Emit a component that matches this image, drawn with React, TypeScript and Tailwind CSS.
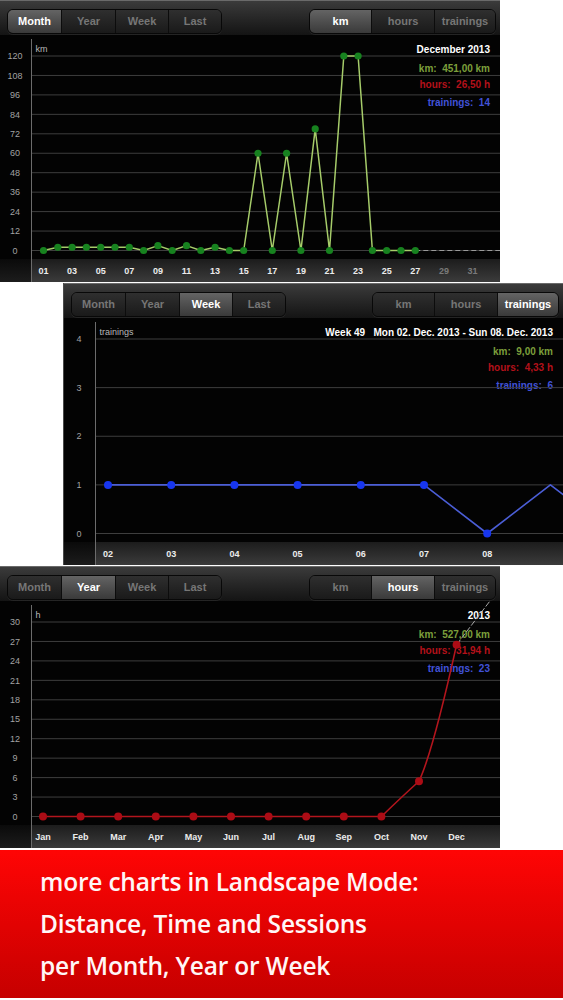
import React from "react";

const Y0 = 250.5;
const GTOP = 56;

type XL = { x: number; t: string; dim?: boolean };

function Segmented({
  labels,
  widths,
  active,
}: {
  labels: string[];
  widths: string[];
  active: number;
}) {
  return (
    <div className="flex h-[25px] rounded-[6px] border border-[#080808] overflow-hidden shadow-[0_1px_0_rgba(255,255,255,0.07)]">
      {labels.map((l, i) => (
        <div
          key={l}
          className={`${widths[i]} flex items-center justify-center text-[11px] font-bold ${
            i > 0 ? "border-l border-[#0c0c0c]" : ""
          } ${
            i === active
              ? "bg-gradient-to-b from-[#646464] to-[#3a3a3a] text-white"
              : "bg-gradient-to-b from-[#2f2f2f] to-[#1a1a1a] text-[#767676]"
          }`}
        >
          {l}
        </div>
      ))}
    </div>
  );
}

function Toolbar({ left, right }: { left: number; right: number }) {
  return (
    <div className="h-[35px] flex items-start justify-between pt-[8px] pl-[7px] pr-[4px] border-t border-[#6a6a6a] bg-gradient-to-b from-[#3b3b3b] to-[#141414]">
      <Segmented
        labels={["Month", "Year", "Week", "Last"]}
        widths={["w-[53px]", "w-[54px]", "w-[53px]", "w-[53px]"]}
        active={left}
      />
      <Segmented
        labels={["km", "hours", "trainings"]}
        widths={["w-[61px]", "w-[63px]", "w-[61px]"]}
        active={right}
      />
    </div>
  );
}

function Stats({
  title,
  km,
  hours,
  trainings,
}: {
  title: string;
  km: string;
  hours: string;
  trainings: string;
}) {
  return (
    <div className="absolute right-[10px] top-[7px] flex flex-col items-end text-[10px] font-bold leading-[16px] whitespace-pre">
      <div className="text-white">{title}</div>
      <div className="mt-[3px] text-[#7c9f3b]">{km}</div>
      <div className="text-[#b3111a]">{hours}</div>
      <div className="mt-[2px] text-[#4152d8]">{trainings}</div>
    </div>
  );
}

function ChartFrame({
  id,
  ticks,
  max,
  unit,
  xLabels,
  children,
}: {
  id: string;
  ticks: number[];
  max: number;
  unit: string;
  xLabels: XL[];
  children?: React.ReactNode;
}) {
  const ty = (v: number) => Y0 - (v / max) * (Y0 - GTOP);
  return (
    <svg
      className="relative z-10 block"
      width={500}
      height={247}
      viewBox="0 35 500 247"
      fontFamily="'Liberation Sans', Arial, sans-serif"
    >
      <defs>
        <linearGradient id={`${id}b`} x1="0" y1="0" x2="0" y2="1">
          <stop offset="0" stopColor="#1c1c1c" />
          <stop offset="1" stopColor="#3b3b3b" />
        </linearGradient>
        <linearGradient id={`${id}l`} x1="0" y1="0" x2="0" y2="1">
          <stop offset="0" stopColor="#0a0a0a" />
          <stop offset="1" stopColor="#1c1c1c" />
        </linearGradient>
      </defs>
      <rect x={31} y={259} width={469} height={23} fill={`url(#${id}b)`} />
      <rect x={0} y={259} width={31} height={23} fill={`url(#${id}l)`} />
      {ticks.map((v) => (
        <line key={v} x1={31} x2={500} y1={ty(v)} y2={ty(v)} stroke="#3e3e3e" strokeWidth={1} />
      ))}
      <line x1={31.5} x2={31.5} y1={39} y2={282} stroke="#6c6c6c" strokeWidth={1} />
      {ticks.map((v) => (
        <text key={v} x={15} y={ty(v) + 3.2} fontSize={9} fill="#a2a2a2" textAnchor="middle">
          {v}
        </text>
      ))}
      <text x={35.5} y={52} fontSize={9} fill="#b8b8b8">
        {unit}
      </text>
      {xLabels.map((l) => (
        <text
          key={l.t}
          x={l.x}
          y={273.5}
          fontSize={9}
          fontWeight="bold"
          fill={l.dim ? "#7a7a7a" : "#ececec"}
          textAnchor="middle"
        >
          {l.t}
        </text>
      ))}
      {children}
    </svg>
  );
}

function Panel({
  left,
  right,
  className,
  children,
}: {
  left: number;
  right: number;
  className?: string;
  children: React.ReactNode;
}) {
  return (
    <div className={`w-[500px] h-[282px] bg-black flex flex-col ${className ?? ""}`}>
      <Toolbar left={left} right={right} />
      <div className="relative h-[247px] bg-[#030303]">{children}</div>
    </div>
  );
}

/* ---------- Panel 1 : Month / km ---------- */
const dayX = (d: number) => 43.5 + (d - 1) * 14.3;
const kmVals = [0, 2, 2, 2, 2, 2, 2, 0, 3, 0, 3, 0, 2, 0, 0, 60, 0, 60, 0, 75, 0, 120, 120, 0, 0, 0, 0];
const kmY = (v: number) => Y0 - (v / 120) * (Y0 - GTOP);
const dayLabels: XL[] = [1, 3, 5, 7, 9, 11, 13, 15, 17, 19, 21, 23, 25, 27, 29, 31].map((d) => ({
  x: dayX(d),
  t: String(d).padStart(2, "0"),
  dim: d > 27,
}));

/* ---------- Panel 2 : Week / trainings ---------- */
const wkX = (i: number) => 44 + i * 63.2;
const trY = (v: number) => Y0 - (v / 4) * (Y0 - GTOP);
const wkVals = [1, 1, 1, 1, 1, 1, 0, 1, 0];
const wkLabels: XL[] = ["02", "03", "04", "05", "06", "07", "08"].map((t, i) => ({ x: wkX(i), t }));

/* ---------- Panel 3 : Year / hours ---------- */
const moX = (i: number) => 43 + i * 37.6;
const hY = (v: number) => Y0 - (v / 30) * (Y0 - GTOP);
const hVals = [0, 0, 0, 0, 0, 0, 0, 0, 0, 0, 5.44, 26.5];
const moLabels: XL[] = ["Jan", "Feb", "Mar", "Apr", "May", "Jun", "Jul", "Aug", "Sep", "Oct", "Nov", "Dec"].map(
  (t, i) => ({ x: moX(i), t })
);

export default function App() {
  const kmPts = kmVals.map((v, i) => `${dayX(i + 1)},${kmY(v)}`).join(" ");
  const wkPts = wkVals.map((v, i) => `${wkX(i)},${trY(v)}`).join(" ");
  const nov = { x: moX(10), y: hY(5.44) };
  const dec = { x: moX(11), y: hY(26.5) };
  const oct = { x: moX(9), y: hY(0) };

  return (
    <div className="w-[563px] bg-white font-['Liberation_Sans',Arial,sans-serif]">
      {/* Panel 1 */}
      <Panel left={0} right={0}>
        <Stats title="December 2013" km="km:  451,00 km" hours="hours:  26,50 h" trainings="trainings:  14" />
        <ChartFrame id="c1" ticks={[0, 12, 24, 36, 48, 60, 72, 84, 96, 108, 120]} max={120} unit="km" xLabels={dayLabels}>
          <line
            x1={dayX(27)}
            x2={500}
            y1={Y0}
            y2={Y0}
            stroke="#9a9a9a"
            strokeWidth={1.2}
            strokeDasharray="5 3"
          />
          <polyline points={kmPts} fill="none" stroke="#a6cc6a" strokeWidth={1.5} strokeLinejoin="round" />
          {kmVals.map((v, i) => (
            <circle key={i} cx={dayX(i + 1)} cy={kmY(v)} r={3.6} fill="#17821f" />
          ))}
        </ChartFrame>
      </Panel>

      {/* Panel 2 */}
      <Panel left={2} right={2} className="ml-[63px] mt-[1px] border-l border-[#4a4a4a]">
        <Stats
          title="Week 49   Mon 02. Dec. 2013 - Sun 08. Dec. 2013"
          km="km:  9,00 km"
          hours="hours:  4,33 h"
          trainings="trainings:  6"
        />
        <ChartFrame id="c2" ticks={[0, 1, 2, 3, 4]} max={4} unit="trainings" xLabels={wkLabels}>
          <polyline points={wkPts} fill="none" stroke="#4b5ed6" strokeWidth={1.6} strokeLinejoin="round" />
          {wkVals.slice(0, 7).map((v, i) => (
            <circle key={i} cx={wkX(i)} cy={trY(v)} r={4} fill="#1736ef" />
          ))}
        </ChartFrame>
      </Panel>

      {/* Panel 3 */}
      <Panel left={1} right={1} className="mt-[1px]">
        <Stats title="2013" km="km:  527,00 km" hours="hours:  31,94 h" trainings="trainings:  23" />
        <ChartFrame
          id="c3"
          ticks={[0, 3, 6, 9, 12, 15, 18, 21, 24, 27, 30]}
          max={30}
          unit="h"
          xLabels={moLabels}
        >
          <line
            x1={dec.x}
            y1={dec.y}
            x2={493}
            y2={31}
            stroke="#a8a8a8"
            strokeWidth={1}
            strokeDasharray="6 2"
          />
          <polyline
            points={hVals
              .slice(0, 10)
              .map((v, i) => `${moX(i)},${hY(v)}`)
              .join(" ")}
            fill="none"
            stroke="#b3151d"
            strokeWidth={1.6}
          />
          <path
            d={`M${oct.x},${oct.y} Q${oct.x + 22},${nov.y + 14} ${nov.x},${nov.y} Q${nov.x + 14},${nov.y - 30} ${dec.x},${dec.y}`}
            fill="none"
            stroke="#b3151d"
            strokeWidth={1.6}
          />
          {hVals.map((v, i) => (
            <circle key={i} cx={moX(i)} cy={hY(v)} r={4} fill="#ab0c15" />
          ))}
        </ChartFrame>
      </Panel>

      {/* Banner */}
      <div className="mt-[2px] h-[148px] bg-gradient-to-b from-[#ff0505] to-[#c60000] pl-[40px] pt-[11px] text-[#fff6f6] font-['Open_Sans','Noto_Sans',sans-serif] font-semibold text-[24.5px] leading-[42px] tracking-[-0.2px]">
        <div>more charts in Landscape Mode:</div>
        <div>Distance, Time and Sessions</div>
        <div>per Month, Year or Week</div>
      </div>
    </div>
  );
}
